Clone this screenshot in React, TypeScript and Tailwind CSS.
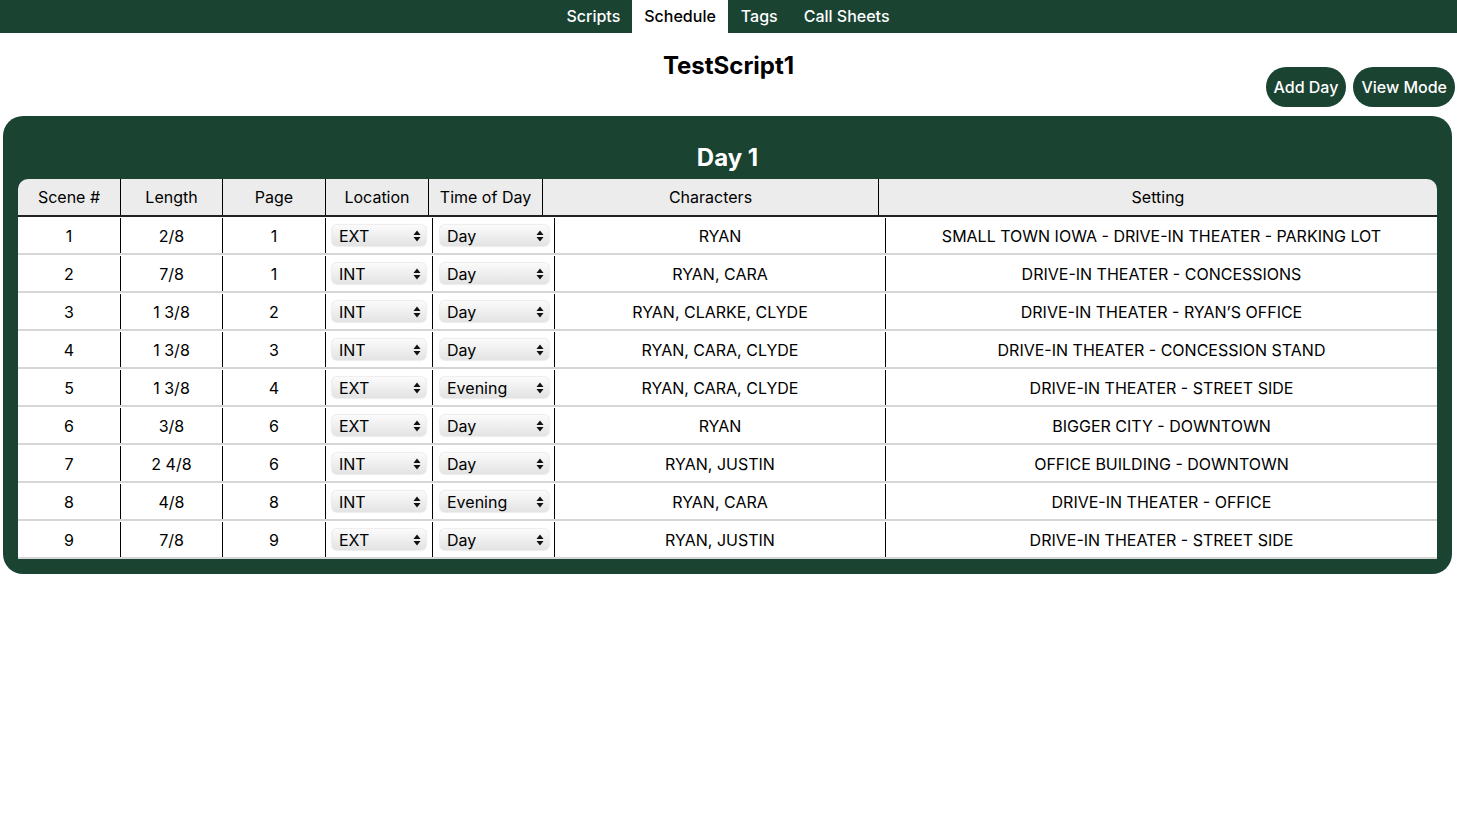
import React from "react";

const rows = [
  ["1", "2/8", "1", "EXT", "Day", "RYAN", "SMALL TOWN IOWA - DRIVE-IN THEATER - PARKING LOT"],
  ["2", "7/8", "1", "INT", "Day", "RYAN, CARA", "DRIVE-IN THEATER - CONCESSIONS"],
  ["3", "1 3/8", "2", "INT", "Day", "RYAN, CLARKE, CLYDE", "DRIVE-IN THEATER - RYAN\u2019S OFFICE"],
  ["4", "1 3/8", "3", "INT", "Day", "RYAN, CARA, CLYDE", "DRIVE-IN THEATER - CONCESSION STAND"],
  ["5", "1 3/8", "4", "EXT", "Evening", "RYAN, CARA, CLYDE", "DRIVE-IN THEATER - STREET SIDE"],
  ["6", "3/8", "6", "EXT", "Day", "RYAN", "BIGGER CITY - DOWNTOWN"],
  ["7", "2 4/8", "6", "INT", "Day", "RYAN, JUSTIN", "OFFICE BUILDING - DOWNTOWN"],
  ["8", "4/8", "8", "INT", "Evening", "RYAN, CARA", "DRIVE-IN THEATER - OFFICE"],
  ["9", "7/8", "9", "EXT", "Day", "RYAN, JUSTIN", "DRIVE-IN THEATER - STREET SIDE"],
];

const headers = ["Scene #", "Length", "Page", "Location", "Time of Day", "Characters", "Setting"];

function Arrows() {
  return (
    <svg width="8" height="12" viewBox="0 0 8 12" className="shrink-0">
      <path d="M4 0.5 L7.5 5 L0.5 5 Z" fill="#111" />
      <path d="M4 11.5 L7.5 7 L0.5 7 Z" fill="#111" />
    </svg>
  );
}

function FakeSelect({ value }: { value: string }) {
  return (
    <div className="flex h-[21px] w-full items-center justify-between rounded-[5px] bg-gradient-to-b from-[#fbfbfb] to-[#e3e3e3] pl-[7px] pr-[5px] shadow-[0_0_1.5px_rgba(0,0,0,0.35)]">
      <span className="text-[16px] leading-none text-black">{value}</span>
      <Arrows />
    </div>
  );
}

export default function App() {
  return (
    <div
      className="min-h-[817px] w-[1457px] bg-white text-black"
      style={{ fontFamily: "Inter, 'Noto Sans', Arial, sans-serif" }}
    >
      <nav className="flex h-[33px] items-stretch justify-center bg-[#1a4332]">
        <div className="flex items-center px-[12px] pb-[1px] text-[16px] font-medium text-white">Scripts</div>
        <div className="flex items-center bg-white px-[12px] pb-[1px] text-[16px] font-medium text-black">Schedule</div>
        <div className="flex items-center px-[13px] pb-[1px] text-[16px] font-medium text-white">Tags</div>
        <div className="flex items-center px-[13px] pb-[1px] text-[16px] font-medium text-white">Call Sheets</div>
      </nav>

      <div className="grid h-[83px] grid-cols-[1fr_auto_1fr]">
        <div />
        <h1 className="pt-[17px] text-[24px] font-bold leading-[32px]">TestScript1</h1>
        <div className="flex items-start justify-end gap-[7px] pr-[2px] pt-[34px]">
          <button className="h-[40px] rounded-full bg-[#1a4332] px-[8px] text-[16px] font-medium text-white">
            Add Day
          </button>
          <button className="h-[40px] rounded-full bg-[#1a4332] px-[8px] text-[16px] font-medium text-white">
            View Mode
          </button>
        </div>
      </div>

      <section className="ml-[3px] mr-[5px] rounded-[20px] bg-[#1a4332] px-[15px] pb-[15px]">
        <h2 className="pb-[5px] pt-[26px] text-center text-[24px] font-bold leading-[32px] text-white">Day 1</h2>

        <div className="grid h-[38px] grid-cols-[102px_102px_103px_103px_114px_336px_1fr] rounded-t-[10px] border-b-2 border-[#222] bg-[#ececec]">
          {headers.map((h, i) => (
            <div
              key={h}
              className={`flex items-center justify-center text-[16px] ${i > 0 ? "border-l border-black" : ""}`}
            >
              {h}
            </div>
          ))}
        </div>

        <div className="bg-white">
          {rows.map((r, ri) => (
            <div
              key={ri}
              className="grid h-[38px] grid-cols-[102px_102px_103px_107px_122px_331px_1fr] border-b-2 border-[#d6d6d6] pt-[1px]"
            >
              <div className="flex items-center justify-center text-[16px]">{r[0]}</div>
              <div className="flex items-center justify-center border-l border-black text-[16px]">{r[1]}</div>
              <div className="flex items-center justify-center border-l border-black text-[16px]">{r[2]}</div>
              <div className="flex items-center border-l border-black pl-[6px] pr-[6px]">
                <FakeSelect value={r[3]} />
              </div>
              <div className="flex items-center border-l border-black pl-[7px] pr-[5px]">
                <FakeSelect value={r[4]} />
              </div>
              <div className="flex items-center justify-center border-l border-black text-[16px]">{r[5]}</div>
              <div className="flex items-center justify-center border-l border-black text-[16px]">{r[6]}</div>
            </div>
          ))}
        </div>
      </section>
    </div>
  );
}
